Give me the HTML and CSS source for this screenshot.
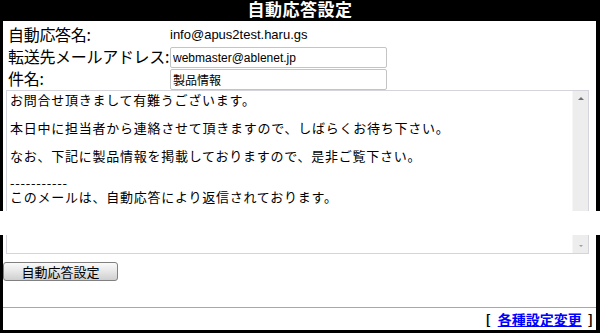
FILE: index.html
```html
<!DOCTYPE html>
<html lang="ja">
<head>
<meta charset="utf-8">
<title>自動応答設定</title>
<link rel="stylesheet" href="styles.css">
</head>
<body>
<div class="frame">
  <div class="title">自動応答設定</div>
  <div class="fields">
    <div class="label">自動応答名:</div>
    <div class="value">info@apus2test.haru.gs</div>
    <div class="label">転送先メールアドレス:</div>
    <div class="value"><input class="field" type="text" value="webmaster@ablenet.jp"></div>
    <div class="label">件名:</div>
    <div class="value"><input class="field" type="text" value="製品情報"></div>
  </div>
  <div class="area">
    <textarea class="body-text">お問合せ頂きまして有難うございます。

本日中に担当者から連絡させて頂きますので、しばらくお待ち下さい。

なお、下記に製品情報を掲載しておりますので、是非ご覧下さい。

-----------
このメールは、自動応答により返信されております。</textarea>
    <div class="scroll">
      <span class="arrow up"></span>
      <span class="arrow down"></span>
    </div>
  </div>
  <div class="actions"><button class="btn" type="button">自動応答設定</button></div>
  <div class="spacer"></div>
  <div class="footer">[<a class="link" href="#">各種設定変更</a>]</div>
  <div class="glitch"></div>
</div>
</body>
</html>
```

FILE: styles.css
```css
html, body {
  margin: 0;
  padding: 0;
  background: #fff;
}
body {
  font-family: "Noto Sans CJK JP", "Liberation Sans", sans-serif;
  color: #000;
}
.frame {
  position: relative;
  width: 600px;
  height: 333px;
  box-sizing: border-box;
  border-left: 3px solid #000;
  border-right: 4px solid #000;
  border-bottom: 3px solid #000;
  display: flex;
  flex-direction: column;
}
.title {
  background: #000;
  color: #fff;
  height: 21px;
  line-height: 21px;
  margin-left: -3px;
  margin-right: -4px;
  text-align: center;
  font-family: "Liberation Sans", "Noto Sans CJK JP", sans-serif;
  font-size: 17px;
  font-weight: bold;
  letter-spacing: 0.5px;
}
.fields {
  display: grid;
  grid-template-columns: 167px 1fr;
  grid-auto-rows: 22px;
  padding-top: 3px;
}
.label {
  padding-left: 5px;
  font-size: 16px;
  line-height: 20px;
  white-space: nowrap;
  letter-spacing: -0.3px;
}
.value {
  font-size: 13px;
  line-height: 20px;
  display: flex;
  align-items: center;
  font-family: "Liberation Sans", "Noto Sans CJK JP", sans-serif;
}
.value:first-of-type { padding-left: 2px; }
.field {
  width: 217px;
  height: 21px;
  box-sizing: border-box;
  border: 1px solid #c4c4c4;
  border-radius: 2px;
  padding: 0 2px;
  font-size: 12px;
  font-family: "Liberation Sans", "Noto Sans CJK JP", sans-serif;
  color: #000;
  background: #fff;
  margin-top: 1px;
}
.area {
  margin-left: 3px;
  width: 583px;
  height: 164px;
  box-sizing: border-box;
  border: 1px solid #d4d4dc;
  display: flex;
}
.body-text {
  flex: 1;
  border: 0;
  outline: none;
  resize: none;
  padding: 2px 3px;
  margin: 0;
  font-family: "Noto Sans CJK JP", sans-serif;
  font-size: 13px;
  line-height: 13.9px;
  letter-spacing: 0.75px;
  color: #000;
  overflow: hidden;
  background: #fff;
}
.scroll {
  width: 15px;
  background: #ededed;
  border-left: 1px solid #f6f6f6;
  display: flex;
  flex-direction: column;
  justify-content: space-between;
  align-items: center;
  padding: 6px 0 6px;
}
.arrow {
  width: 0;
  height: 0;
  border-left: 3px solid transparent;
  border-right: 3px solid transparent;
}
.arrow.up { border-bottom: 3px solid #707070; }
.arrow.down { border-top: 2px solid #a0a0a0; border-left-width: 2px; border-right-width: 2px; }
.actions {
  display: flex;
  padding-top: 8px;
}
.btn {
  width: 115px;
  height: 19px;
  padding: 0;
  margin: 0;
  border: 1px solid #808080;
  border-radius: 3px;
  background: linear-gradient(#fafafa, #e6e6e6 50%, #cfcfcf);
  font-family: "Noto Sans CJK JP", sans-serif;
  font-size: 13px;
  line-height: 16px;
  color: #000;
}
.spacer {
  flex: 1;
  border-bottom: 1px solid #a8a8a8;
}
.footer {
  height: 22px;
  line-height: 22px;
  text-align: right;
  font-size: 14px;
  font-weight: bold;
  padding-right: 3px;
  white-space: pre;
}
.link {
  color: #0000ff;
  text-decoration: underline;
  margin: 0 6px 0 7px;
}
.glitch {
  position: absolute;
  left: -3px;
  right: -4px;
  top: 211px;
  height: 24px;
  background: #fff;
}
```
